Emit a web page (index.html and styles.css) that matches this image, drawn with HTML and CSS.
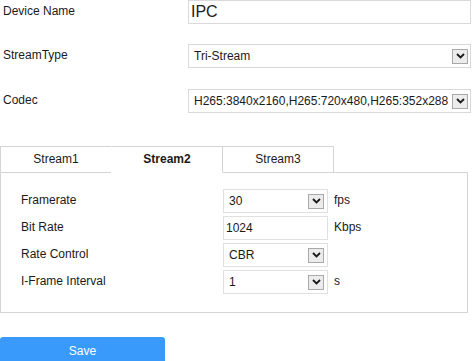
FILE: index.html
```html
<!DOCTYPE html>
<html>
<head>
<meta charset="utf-8">
<link rel="stylesheet" href="styles.css">
</head>
<body>
<div class="page">
  <div class="top">
    <div class="row">
      <div class="label">Device Name</div>
      <div class="field text big">IPC</div>
    </div>
    <div class="row">
      <div class="label">StreamType</div>
      <div class="field select"><span class="val">Tri-Stream</span><span class="arrow"><svg width="9" height="6" viewBox="0 0 9 6"><polyline points="1,1 4.5,4.5 8,1" fill="none" stroke="#1a1a1a" stroke-width="1.8"/></svg></span></div>
    </div>
    <div class="row">
      <div class="label">Codec</div>
      <div class="field select"><span class="val">H265:3840x2160,H265:720x480,H265:352x288</span><span class="arrow"><svg width="9" height="6" viewBox="0 0 9 6"><polyline points="1,1 4.5,4.5 8,1" fill="none" stroke="#1a1a1a" stroke-width="1.8"/></svg></span></div>
    </div>
  </div>

  <div class="tabs">
    <div class="tab">Stream1</div>
    <div class="tab active">Stream2</div>
    <div class="tab">Stream3</div>
  </div>
  <div class="panel">
    <div class="prow">
      <div class="plabel">Framerate</div>
      <div class="pfield pselect"><span class="val">30</span><span class="arrow parrow"><svg width="9" height="6" viewBox="0 0 9 6"><polyline points="1,1 4.5,4.5 8,1" fill="none" stroke="#1a1a1a" stroke-width="1.8"/></svg></span></div>
      <div class="unit">fps</div>
    </div>
    <div class="prow">
      <div class="plabel">Bit Rate</div>
      <div class="pfield ptext">1024</div>
      <div class="unit">Kbps</div>
    </div>
    <div class="prow">
      <div class="plabel">Rate Control</div>
      <div class="pfield pselect"><span class="val">CBR</span><span class="arrow parrow"><svg width="9" height="6" viewBox="0 0 9 6"><polyline points="1,1 4.5,4.5 8,1" fill="none" stroke="#1a1a1a" stroke-width="1.8"/></svg></span></div>
      <div class="unit"></div>
    </div>
    <div class="prow">
      <div class="plabel">I-Frame Interval</div>
      <div class="pfield pselect"><span class="val">1</span><span class="arrow parrow"><svg width="9" height="6" viewBox="0 0 9 6"><polyline points="1,1 4.5,4.5 8,1" fill="none" stroke="#1a1a1a" stroke-width="1.8"/></svg></span></div>
      <div class="unit">s</div>
    </div>
  </div>

  <button class="save">Save</button>
</div>
</body>
</html>
```

FILE: styles.css
```css
* { box-sizing: border-box; }
html, body {
  margin: 0;
  padding: 0;
  background: #fff;
}
body {
  font-family: "Liberation Sans", Arial, sans-serif;
  font-size: 12px;
  color: #1a1a1a;
}
.page {
  width: 473px;
}
.top {
  display: flex;
  flex-direction: column;
  gap: 20px;
}
.row {
  display: flex;
  align-items: center;
  height: 24px;
}
.row + .row + .row { margin-top: 1px; }
.label {
  width: 188px;
  padding-left: 3px;
  padding-bottom: 2px;
}
.field {
  width: 283px;
  height: 24px;
  border: 1px solid #d9d9d9;
  display: flex;
  align-items: center;
}
.text { padding-left: 2px; }
.big { font-size: 16px; }
.select {
  padding-left: 5px;
  justify-content: space-between;
  padding-right: 2px;
}
.select .val { white-space: nowrap; }
.arrow {
  width: 16px;
  height: 15px;
  border: 1px solid #a9a9a9;
  background: #ececec;
  display: flex;
  align-items: center;
  justify-content: center;
  flex: none;
}
.tabs {
  display: flex;
  margin-top: 33px;
}
.tab {
  width: 112px;
  height: 27px;
  margin-right: -1px;
  border: 1px solid #d4d4d4;
  display: flex;
  align-items: center;
  justify-content: center;
  padding-bottom: 1px;
  background: #fff;
}
.tab.active {
  font-weight: bold;
  border-left-color: transparent;
  border-bottom-color: #fff;
  position: relative;
  z-index: 1;
}
.panel {
  width: 468px;
  height: 141px;
  margin-top: -1px;
  border: 1px solid #d4d4d4;
  padding: 16px 0 0 20px;
  display: flex;
  flex-direction: column;
  gap: 3px;
}
.prow {
  display: flex;
  align-items: center;
  height: 24px;
}
.plabel {
  width: 202px;
  padding-bottom: 2px;
}
.pfield {
  width: 105px;
  height: 24px;
  border: 1px solid #e0e0e0;
  display: flex;
  align-items: center;
}
.ptext { padding-left: 2px; }
.pselect {
  padding-left: 5px;
  padding-right: 3px;
  justify-content: space-between;
}
.unit {
  margin-left: 6px;
  padding-bottom: 2px;
}
.save {
  display: block;
  margin-top: 24px;
  width: 165px;
  height: 28px;
  border: none;
  border-radius: 3px;
  background: #3a9afc;
  color: #fff;
  font-family: "Liberation Sans", Arial, sans-serif;
  font-size: 12px;
  padding: 0;
}
```
